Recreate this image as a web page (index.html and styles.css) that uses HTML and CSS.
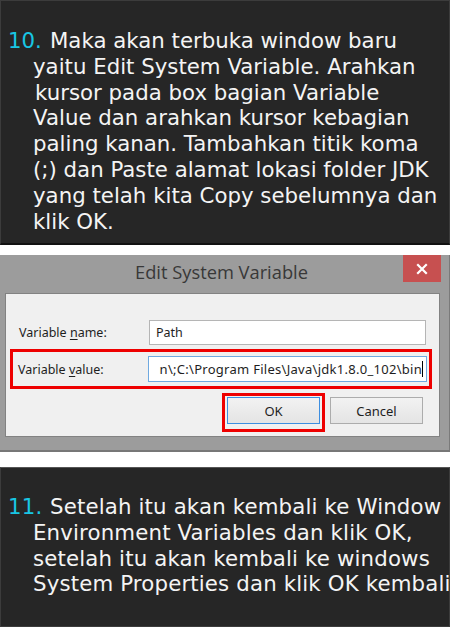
FILE: index.html
```html
<!DOCTYPE html>
<html>
<head>
<meta charset="utf-8">
<link rel="stylesheet" href="styles.css">
</head>
<body>
<section class="slide slide-top">
  <div class="step">
    <div class="line first"><span class="num">10.</span>Maka akan terbuka window baru</div>
    <div class="line">yaitu Edit System Variable. Arahkan</div>
    <div class="line nudge">kursor pada box bagian Variable</div>
    <div class="line">Value dan arahkan kursor kebagian</div>
    <div class="line">paling kanan. Tambahkan titik koma</div>
    <div class="line">(;) dan Paste alamat lokasi folder JDK</div>
    <div class="line">yang telah kita Copy sebelumnya dan</div>
    <div class="line">klik OK.</div>
  </div>
</section>

<div class="dialog">
  <div class="titlebar">
    <div class="title">Edit System Variable</div>
    <div class="close">
      <svg width="12" height="12" viewBox="0 0 12 12"><path d="M2 2 L10 10 M10 2 L2 10" stroke="#fff" stroke-width="2.2" stroke-linecap="square"/></svg>
    </div>
  </div>
  <div class="panel">
    <div class="row">
      <label class="lbl">Variable <u>n</u>ame:</label>
      <div class="input">Path</div>
    </div>
    <div class="row highlight">
      <label class="lbl">Variable <u>v</u>alue:</label>
      <div class="input focus"><span class="val">n\;C:\Program Files\Java\jdk1.8.0_102\bin</span><span class="caret"></span></div>
    </div>
    <div class="buttons">
      <div class="okmark"><div class="btn default">OK</div></div>
      <div class="btn">Cancel</div>
    </div>
  </div>
</div>

<section class="slide slide-bottom">
  <div class="step">
    <div class="line first"><span class="num">11.</span>Setelah itu akan kembali ke Window</div>
    <div class="line">Environment Variables dan klik OK,</div>
    <div class="line">setelah itu akan kembali ke windows</div>
    <div class="line">System Properties dan klik OK kembali</div>
  </div>
</section>
</body>
</html>
```

FILE: styles.css
```css
html, body {
  margin: 0;
  padding: 0;
  background: #ffffff;
}
body {
  width: 450px;
  height: 627px;
  overflow: hidden;
}

.slide {
  background: #262626;
  border: 1px solid #3c3c3c;
  box-sizing: border-box;
  overflow: hidden;
  font-family: "DejaVu Sans", Verdana, sans-serif;
  font-size: 21.3px;
  color: #f4f4f4;
}
.slide-top {
  height: 245px;
  padding-top: 27px;
  border-bottom: 2px solid #111;
  margin-bottom: 10px;
}
.slide-bottom {
  height: 160px;
  padding-top: 26px;
  margin-top: 15px;
  border-top-color: #555;
}
.slide-bottom .line {
  letter-spacing: 0.15px;
}
.step {
  padding-left: 32px;
}
.line {
  height: 25.8px;
  line-height: 25.8px;
  white-space: nowrap;
}
.line.first {
  margin-left: -25px;
}
.line.nudge {
  padding-left: 2px;
}
.num {
  display: inline-block;
  width: 42px;
  color: #18c6e4;
}

/* dialog */
.dialog {
  background: #9c9c9c;
  height: 197px;
  box-sizing: border-box;
  padding: 0 9px 0 5px;
  border-right: 1px solid #7a7a7a;
  border-bottom: 2px solid #777;
  font-family: "Noto Sans", "Open Sans", sans-serif;
  font-size: 12.5px;
  color: #1e1e1e;
}
.titlebar {
  height: 38px;
  display: flex;
  position: relative;
  justify-content: center;
}
.title {
  font-family: "Open Sans", "Noto Sans", sans-serif;
  font-size: 18.3px;
  color: #383838;
  line-height: 20px;
  padding-top: 7px;
  margin-left: -2px;
}
.close {
  position: absolute;
  right: -1px;
  top: 0;
  width: 38px;
  height: 27px;
  background: #c75050;
  display: flex;
  align-items: center;
  justify-content: center;
}
.panel {
  background: #f0f0f0;
  border: 1px solid #828282;
  height: 144px;
  box-sizing: border-box;
  padding-top: 26px;
}
.row {
  display: flex;
  align-items: center;
  padding: 0 13px 0 13px;
}
.lbl {
  width: 130px;
  flex: none;
}
.lbl u {
  text-decoration-thickness: 1px;
  text-underline-offset: 2px;
}
.input {
  flex: 1;
  min-width: 0;
  height: 25px;
  box-sizing: border-box;
  background: #fff;
  border: 1px solid #b5b5b5;
  display: flex;
  align-items: center;
  padding: 0 6px;
  overflow: hidden;
  white-space: nowrap;
  font-size: 12.5px;
}
.input.focus {
  height: 26px;
  border-color: #6fa9e0;
  justify-content: flex-end;
  padding: 0 3px 0 4px;
}
.val {
  flex: none;
  font-size: 13px;
  letter-spacing: 0.28px;
}
.caret {
  flex: none;
  width: 1px;
  height: 16px;
  background: #000;
}
.row.highlight {
  margin: 4px 7px 0 4px;
  border: 3px solid #ee0000;
  padding: 4px 2px 4px 5px;
}
.buttons {
  display: flex;
  justify-content: flex-end;
  align-items: flex-start;
  padding-right: 16px;
  margin-top: 4px;
  gap: 5px;
}
.okmark {
  border: 3px solid #ee0000;
  padding: 1px 2px 5px 2px;
}
.btn {
  width: 93px;
  height: 27px;
  box-sizing: border-box;
  border: 1px solid #acacac;
  background: linear-gradient(#f2f2f2, #e4e4e4);
  display: flex;
  align-items: center;
  justify-content: center;
  font-size: 13px;
  margin-top: 4px;
}
.okmark .btn {
  margin-top: 0;
  border-color: #3d8ee0;
}
```
